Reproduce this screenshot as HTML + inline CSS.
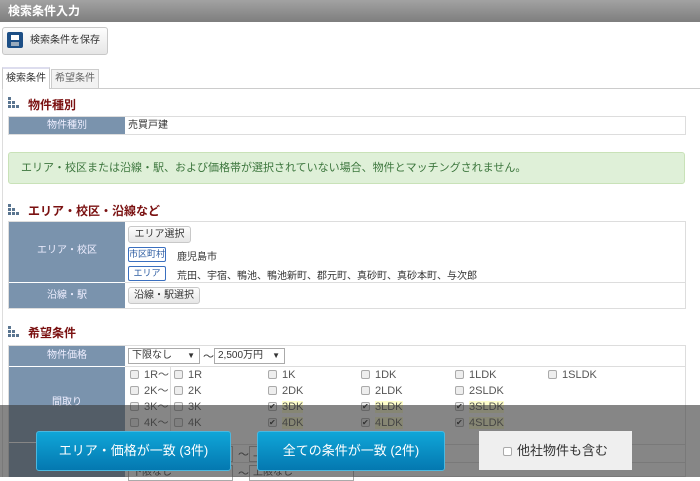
<!DOCTYPE html>
<html><head><meta charset="utf-8"><style>
*{box-sizing:border-box;margin:0;padding:0}
body{width:700px;height:477px;overflow:hidden;background:#fff;font-family:"Liberation Sans","Noto Sans CJK JP",sans-serif;font-size:11px;color:#333;position:relative}
.a{position:absolute}
.hdr{left:0;top:0;width:700px;height:22px;background:linear-gradient(#a2a2a2,#7e7e7e);color:#fff;font-weight:bold;font-size:12px;line-height:22px;padding-left:8px}
.btn{background:linear-gradient(#fdfdfd,#e6e6e6);border:1px solid #c8c8c8;border-radius:3px;font-size:10px;text-align:center}
.h{font-size:12px;font-weight:bold;color:#7a1010;}
.ic{width:13px;height:12px}
.lab{background:#7a93ad;color:#eef;font-size:10px;text-align:center}
.cell{border:1px solid #ddd}
.tag{border:1px solid #3a6fbf;border-radius:2px;font-size:9px;color:#2a5aa0;text-align:center;line-height:13px;height:15px;background:#fff}
.cb{width:9px;height:9px;border:1px solid #aaa;background:#eee;border-radius:2px;display:inline-block;vertical-align:-1px;margin-right:5px;position:relative}
.ck::after{content:"✔";position:absolute;left:0;top:-4px;font-size:8px;color:#222}
.m{font-size:11px;color:#555;line-height:16px}
.y{background:#ffffcc}
.sel{border:1px solid #aaa;height:16px;font-size:10px;line-height:14px;padding-left:3px;background:#fff}
.bb{background:linear-gradient(#10a6d8,#0478b0);color:#fff;font-size:13px;text-align:center;line-height:38px;border-radius:3px;border:1px solid #4ab8e0}
</style></head><body>
<div class="a hdr">検索条件入力</div>
<div class="a btn" style="left:2px;top:27px;width:106px;height:28px;line-height:26px;padding-left:20px">検索条件を保存</div>
<div class="a" style="left:7px;top:32px;width:16px;height:16px;background:#1d4f86;border-radius:2px"><div class="a" style="left:4px;top:3px;width:8px;height:5px;background:#fff"></div><div class="a" style="left:4px;top:10px;width:8px;height:4px;background:#9ab"></div></div>
<div class="a" style="left:2px;top:88px;width:698px;height:1px;background:#ccc"></div>
<div class="a" style="left:2px;top:88px;width:1px;height:389px;background:#ddd"></div>
<div class="a" style="left:2px;top:67px;width:48px;height:22px;border:1px solid #ccc;border-bottom:none;background:#fff;border-top:2px solid #dde;font-size:10px;line-height:20px;text-align:center">検索条件</div>
<div class="a" style="left:51px;top:69px;width:48px;height:20px;border:1px solid #ccc;background:#f2f2f2;font-size:10px;color:#666;line-height:18px;text-align:center">希望条件</div>

<svg class="a ic" style="left:8px;top:97px" viewBox="0 0 13 12"><g fill="#5a7590"><rect x="0" y="0" width="3" height="3"/><rect x="0" y="4" width="3" height="3"/><rect x="4" y="4" width="3" height="3"/><rect x="0" y="8" width="3" height="3"/><rect x="4" y="8" width="3" height="3"/><rect x="8" y="8" width="3" height="3"/></g></svg>
<div class="a h" style="left:28px;top:96px">物件種別</div>
<div class="a cell" style="left:8px;top:116px;width:678px;height:19px"></div>
<div class="a lab" style="left:9px;top:117px;width:116px;height:17px;line-height:17px">物件種別</div>
<div class="a" style="left:128px;top:117px;line-height:17px;font-size:10px">売買戸建</div>

<div class="a" style="left:8px;top:152px;width:677px;height:32px;background:#dff0d8;border:1px solid #c9e2b8;border-radius:3px;color:#3c763d;font-size:11px;line-height:30px;padding-left:12px">エリア・校区または沿線・駅、および価格帯が選択されていない場合、物件とマッチングされません。</div>

<svg class="a ic" style="left:8px;top:204px" viewBox="0 0 13 12"><g fill="#5a7590"><rect x="0" y="0" width="3" height="3"/><rect x="0" y="4" width="3" height="3"/><rect x="4" y="4" width="3" height="3"/><rect x="0" y="8" width="3" height="3"/><rect x="4" y="8" width="3" height="3"/><rect x="8" y="8" width="3" height="3"/></g></svg>
<div class="a h" style="left:28px;top:202px">エリア・校区・沿線など</div>
<div class="a cell" style="left:8px;top:221px;width:678px;height:88px"></div>
<div class="a" style="left:125px;top:282px;width:560px;height:1px;background:#ddd"></div>
<div class="a lab" style="left:9px;top:222px;width:116px;height:60px;line-height:58px">エリア・校区</div>
<div class="a lab" style="left:9px;top:283px;width:116px;height:25px;line-height:25px">沿線・駅</div>
<div class="a btn" style="left:128px;top:226px;width:63px;height:17px;line-height:15px">エリア選択</div>
<div class="a tag" style="left:128px;top:247px;width:38px">市区町村</div>
<div class="a" style="left:177px;top:248px;font-size:10px">鹿児島市</div>
<div class="a tag" style="left:128px;top:266px;width:38px">エリア</div>
<div class="a" style="left:177px;top:267px;font-size:10px">荒田、宇宿、鴨池、鴨池新町、郡元町、真砂町、真砂本町、与次郎</div>
<div class="a btn" style="left:128px;top:287px;width:72px;height:17px;line-height:15px">沿線・駅選択</div>

<svg class="a ic" style="left:8px;top:326px" viewBox="0 0 13 12"><g fill="#5a7590"><rect x="0" y="0" width="3" height="3"/><rect x="0" y="4" width="3" height="3"/><rect x="4" y="4" width="3" height="3"/><rect x="0" y="8" width="3" height="3"/><rect x="4" y="8" width="3" height="3"/><rect x="8" y="8" width="3" height="3"/></g></svg>
<div class="a h" style="left:28px;top:324px">希望条件</div>
<div class="a cell" style="left:8px;top:345px;width:678px;height:132px"></div>
<div class="a lab" style="left:9px;top:346px;width:116px;height:20px;line-height:20px">物件価格</div>
<div class="a lab" style="left:9px;top:367px;width:116px;height:75px;line-height:72px">間取り</div>
<div class="a lab" style="left:9px;top:443px;width:116px;height:34px"></div>
<div class="a" style="left:125px;top:366px;width:560px;height:1px;background:#ddd"></div>
<div class="a" style="left:170px;top:367px;width:1px;height:78px;background:#ddd"></div>
<div class="a sel" style="left:128px;top:348px;width:72px">下限なし<span style="float:right;margin-right:4px;font-size:8px">▼</span></div>
<div class="a" style="left:203px;top:348px">～</div>
<div class="a sel y" style="left:214px;top:348px;width:71px">2,500万円<span style="float:right;margin-right:4px;font-size:8px">▼</span></div>

<div class="a m" style="left:130px;top:367px"><span class="cb"></span>1R～<br><span class="cb"></span>2K～<br><span class="cb"></span>3K～<br><span class="cb"></span>4K～<br><span class="cb"></span>5K～</div>
<div class="a m" style="left:174px;top:367px"><span class="cb"></span>1R<br><span class="cb"></span>2K<br><span class="cb"></span>3K<br><span class="cb"></span>4K<br><span class="cb"></span>5K</div>
<div class="a m" style="left:268px;top:367px"><span class="cb"></span>1K<br><span class="cb"></span>2DK<br><span class="cb ck"></span><span class="y">3DK</span><br><span class="cb ck"></span><span class="y">4DK</span><br><span class="cb ck"></span><span class="y">5DK</span></div>
<div class="a m" style="left:361px;top:367px"><span class="cb"></span>1DK<br><span class="cb"></span>2LDK<br><span class="cb ck"></span><span class="y">3LDK</span><br><span class="cb ck"></span><span class="y">4LDK</span><br><span class="cb ck"></span><span class="y">5LDK以上</span></div>
<div class="a m" style="left:455px;top:367px"><span class="cb"></span>1LDK<br><span class="cb"></span>2SLDK<br><span class="cb ck"></span><span class="y">3SLDK</span><br><span class="cb ck"></span><span class="y">4SLDK</span></div>
<div class="a m" style="left:548px;top:367px"><span class="cb"></span>1SLDK</div>
<div class="a" style="left:125px;top:444px;width:560px;height:1px;background:#ddd"></div>
<div class="a" style="left:125px;top:462px;width:560px;height:1px;background:#ddd"></div>
<div class="a sel" style="left:128px;top:446px;width:105px">下限なし</div>
<div class="a" style="left:238px;top:446px">～</div>
<div class="a sel" style="left:249px;top:446px;width:105px">上限なし</div>
<div class="a sel" style="left:128px;top:465px;width:105px">下限なし</div>
<div class="a" style="left:238px;top:465px">～</div>
<div class="a sel" style="left:249px;top:465px;width:105px">上限なし</div>

<div class="a" style="left:0;top:405px;width:700px;height:72px;background:rgba(60,60,60,0.62)"></div>
<div class="a bb" style="left:36px;top:431px;width:195px;height:40px">エリア・価格が一致 (3件)</div>
<div class="a bb" style="left:257px;top:431px;width:188px;height:40px">全ての条件が一致 (2件)</div>
<div class="a" style="left:479px;top:431px;width:153px;height:39px;background:#efefef;font-size:13px;line-height:39px;text-align:center;color:#333"><span class="cb" style="width:9px;height:9px;background:#fff"></span>他社物件も含む</div>
</body></html>
